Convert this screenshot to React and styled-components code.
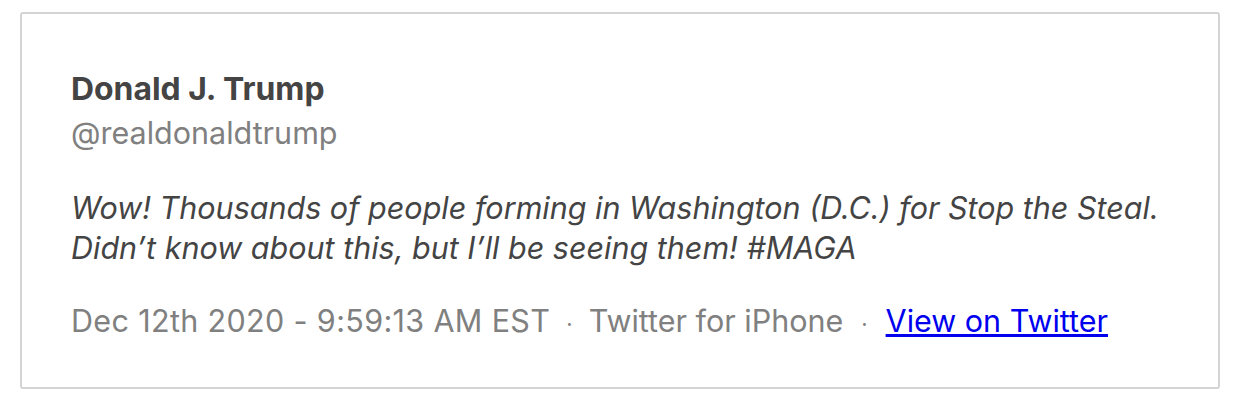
import React from "react";
import styled, { createGlobalStyle } from "styled-components";

const Global = createGlobalStyle`
  html, body { margin: 0; padding: 0; background: #ffffff; }
  body { font-family: Inter, "Noto Sans", "Liberation Sans", sans-serif; }
`;

const Page = styled.div`
  padding: 12px 14px 12px 20px;
`;

const Card = styled.article`
  border: 2px solid #d2d4d6;
  border-radius: 3px;
  padding: 53px 49px 43px 49px;
  display: flex;
  flex-direction: column;
`;

const Name = styled.div`
  font-weight: 700;
  font-size: 31.9px;
  line-height: 44px;
  color: #444444;
`;

const Handle = styled.div`
  font-size: 30.5px;
  line-height: 44px;
  color: #808080;
`;

const Body = styled.p`
  margin: 33px 0 0 0;
  font-style: italic;
  font-size: 30.5px;
  line-height: 40px;
  color: #444444;
`;

const Meta = styled.div`
  margin-top: 33px;
  display: flex;
  align-items: baseline;
  font-size: 30.5px;
  line-height: 40px;
  color: #808080;
`;

const Stamp = styled.span`
  letter-spacing: 0.35px;
`;

const Dot = styled.span`
  margin: 0 ${(p) => (p.$wide ? "18px" : "16px")};
  font-size: 22px;
`;

const Link = styled.a`
  color: #0000ee;
  text-decoration: underline;
`;

export default function App() {
  return (
    <>
      <Global />
      <Page>
        <Card>
          <Name>Donald J. Trump</Name>
          <Handle>@realdonaldtrump</Handle>
          <Body>
            Wow! Thousands of people forming in Washington (D.C.) for Stop the Steal.
            <br />
            Didn’t know about this, but I’ll be seeing them! #MAGA
          </Body>
          <Meta>
            <Stamp>Dec 12th 2020 - 9:59:13 AM EST</Stamp>
            <Dot>·</Dot>
            <span>Twitter for iPhone</span>
            <Dot $wide>·</Dot>
            <Link href="#">View on Twitter</Link>
          </Meta>
        </Card>
      </Page>
    </>
  );
}
